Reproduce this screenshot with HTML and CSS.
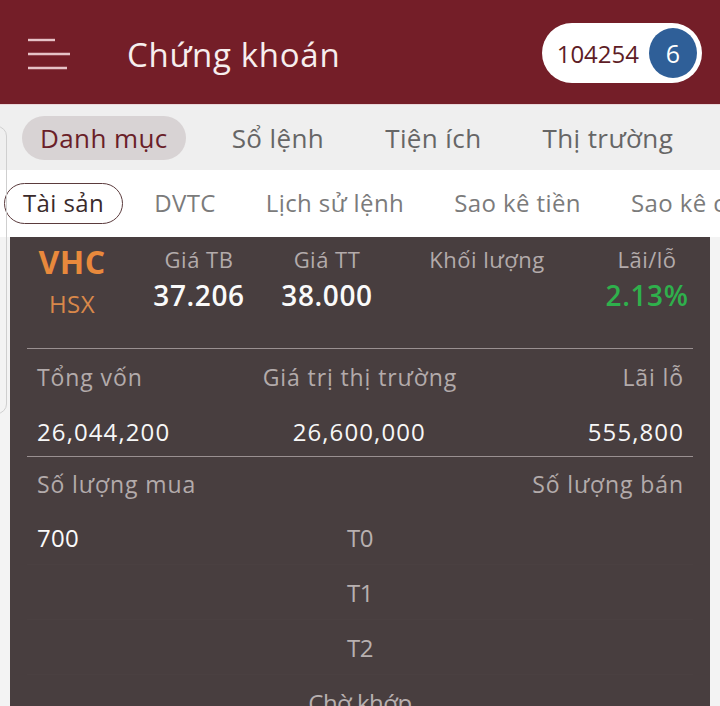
FILE: index.html
```html
<!DOCTYPE html>
<html lang="vi">
<head>
<meta charset="utf-8">
<link rel="stylesheet" href="styles.css">
</head>
<body>
<header class="topbar">
  <svg class="burger" width="44" height="36" viewBox="0 0 44 36">
    <line x1="0" y1="5" x2="27" y2="5" />
    <line x1="0" y1="19" x2="42" y2="19" />
    <line x1="0" y1="33" x2="39" y2="33" />
  </svg>
  <h1 class="title">Chứng khoán</h1>
  <div class="acct">
    <span class="acct-num">104254</span>
    <span class="acct-badge">6</span>
  </div>
</header>

<nav class="tabs">
  <span class="tab active">Danh mục</span>
  <span class="tab">Sổ lệnh</span>
  <span class="tab">Tiện ích</span>
  <span class="tab">Thị trường</span>
</nav>

<nav class="subtabs">
  <span class="subtab active">Tài sản</span>
  <span class="subtab">DVTC</span>
  <span class="subtab">Lịch sử lệnh</span>
  <span class="subtab">Sao kê tiền</span>
  <span class="subtab">Sao kê chứng khoán</span>
</nav>

<main class="card">
  <section class="summary">
    <div class="col">
      <div class="sym">VHC</div>
      <div class="exch">HSX</div>
    </div>
    <div class="col">
      <div class="lbl">Giá TB</div>
      <div class="val">37.206</div>
    </div>
    <div class="col">
      <div class="lbl">Giá TT</div>
      <div class="val">38.000</div>
    </div>
    <div class="col">
      <div class="lbl">Khối lượng</div>
      <div class="val"></div>
    </div>
    <div class="col">
      <div class="lbl">Lãi/lỗ</div>
      <div class="val green">2.13%</div>
    </div>
  </section>

  <section class="block">
    <div class="row3 labels">
      <span>Tổng vốn</span>
      <span class="mid">Giá trị thị trường</span>
      <span class="right">Lãi lỗ</span>
    </div>
    <div class="row3 values">
      <span>26,044,200</span>
      <span class="mid2">26,600,000</span>
      <span class="right">555,800</span>
    </div>
  </section>

  <section class="block qty">
    <div class="row3 labels">
      <span>Số lượng mua</span>
      <span></span>
      <span class="right">Số lượng bán</span>
    </div>
    <div class="trow">
      <span class="buy">700</span>
      <span class="tlabel">T0</span>
      <span></span>
    </div>
    <div class="trow">
      <span class="buy"></span>
      <span class="tlabel">T1</span>
      <span></span>
    </div>
    <div class="trow">
      <span class="buy"></span>
      <span class="tlabel">T2</span>
      <span></span>
    </div>
    <div class="trow">
      <span class="buy"></span>
      <span class="tlabel">Chờ khớp</span>
      <span></span>
    </div>
  </section>
</main>

<div class="side-panel"></div>
</body>
</html>
```

FILE: styles.css
```css
* { box-sizing: border-box; margin: 0; padding: 0; }

html, body {
  width: 720px;
  height: 706px;
  overflow: hidden;
}

body {
  font-family: "Open Sans", "Noto Sans", sans-serif;
  background: #f3f3f3;
  position: relative;
}

.topbar {
  height: 104px;
  background: #741e28;
  display: flex;
  align-items: center;
  padding-left: 28px;
  padding-right: 18px;
}

.burger line {
  stroke: #e6c3c7;
  stroke-width: 2.4;
}

.burger {
  margin-top: 2px;
}

.title {
  margin-left: 55px;
  font-size: 33px;
  font-weight: 400;
  color: #f7eeee;
  letter-spacing: 0.7px;
  margin-top: 4px;
}

.acct {
  margin-left: auto;
  height: 60px;
  background: #fff;
  border-radius: 30px;
  display: flex;
  align-items: center;
  padding-left: 15px;
  padding-right: 5px;
  margin-top: 2px;
}

.acct-num {
  font-size: 24px;
  color: #5e1d26;
}

.acct-badge {
  width: 48px;
  height: 50px;
  border-radius: 50%;
  background: #2f5f98;
  color: #fff;
  font-size: 25px;
  display: flex;
  align-items: center;
  justify-content: center;
  margin-left: 10px;
}

.tabs {
  height: 66px;
  background: #efefef;
  border-top: 1px solid #e9d7d9;
  display: flex;
  align-items: center;
  padding-left: 22px;
  gap: 25px;
}

.tab {
  font-size: 26px;
  letter-spacing: 0.4px;
  color: #666;
  padding: 0 18px;
  height: 44px;
  line-height: 44px;
  border-radius: 22px;
  white-space: nowrap;
}

.tab:nth-child(2) { margin-left: 3px; }

.tab.active {
  background: #d8d3d4;
  color: #6a1f29;
}

.subtabs {
  height: 67px;
  background: #fff;
  display: flex;
  align-items: center;
  padding-left: 4px;
  gap: 12px;
  white-space: nowrap;
  overflow: hidden;
}

.subtab {
  font-size: 24px;
  letter-spacing: 0.4px;
  color: #7b7b7b;
  padding: 0 18px;
  height: 41px;
  line-height: 38px;
  border-radius: 21px;
  border: 1.5px solid transparent;
  flex: none;
}

.subtab.active {
  border-color: #5b3b3d;
  color: #3a2a2b;
}

.card {
  margin: 0 10px;
  background: #483e3f;
  height: 469px;
  padding: 0 17px;
  overflow: hidden;
}

.summary {
  display: grid;
  grid-template-columns: 90px 164px 92px 228px 92px;
  height: 112px;
  border-bottom: 1px solid #9a9091;
  padding-top: 6px;
}

.col {
  text-align: center;
}

.sym {
  font-size: 32px;
  font-weight: 700;
  color: #e8893c;
  line-height: 38px;
  letter-spacing: 0.5px;
}

.exch {
  font-size: 24px;
  color: #d9884a;
  margin-top: 8px;
  line-height: 30px;
  letter-spacing: 0.5px;
}

.lbl {
  font-size: 22px;
  letter-spacing: 0.5px;
  color: #b3abab;
  line-height: 32px;
}

.val {
  font-size: 28px;
  font-weight: 600;
  letter-spacing: 0.6px;
  color: #fafafa;
  line-height: 40px;
  height: 40px;
}

.val.green { color: #2fb04c; }

.block {
  border-bottom: 1px solid #9a9091;
  height: 108px;
}

.row3 {
  display: grid;
  grid-template-columns: 1fr 1fr 1fr;
  padding: 0 9px 0 10px;
}

.row3 .right { text-align: right; }

.labels {
  height: 56px;
  align-items: center;
  font-size: 23px;
  letter-spacing: 0.9px;
  color: #b3abab;
  white-space: nowrap;
}

.labels .mid { margin-left: 10px; }

.values {
  height: 52px;
  align-items: center;
  font-size: 24px;
  letter-spacing: 1.1px;
  color: #f7f7f7;
}

.values .mid2 { margin-left: 40px; }

.qty {
  border-bottom: none;
  height: auto;
}

.qty .labels { height: 53px; }

.trow {
  display: grid;
  grid-template-columns: 1fr 1fr 1fr;
  height: 55px;
  align-items: center;
  padding: 0 10px;
  border-bottom: 1px solid #4a4041;
}

.buy {
  font-size: 24px;
  color: #fafafa;
  letter-spacing: 0.3px;
}

.tlabel {
  text-align: center;
  font-size: 24px;
  color: #b8b0b0;
  letter-spacing: -0.5px;
  white-space: nowrap;
}

.side-panel {
  position: absolute;
  left: -100px;
  top: 126px;
  width: 107px;
  height: 288px;
  border: 1px solid #cfcfcf;
  border-radius: 10px;
  background: transparent;
}
```
